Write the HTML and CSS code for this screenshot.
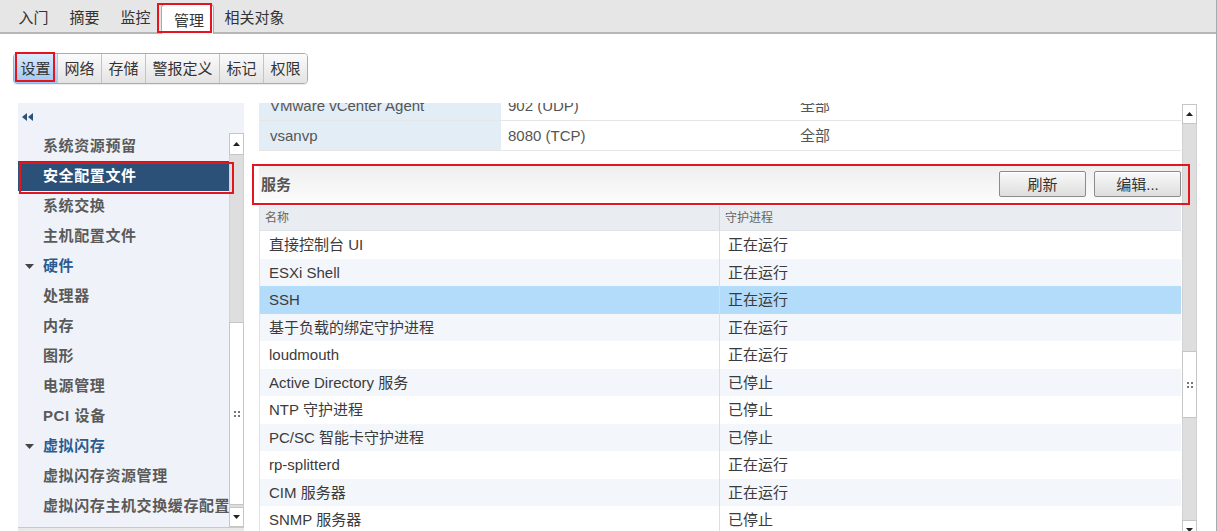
FILE: index.html
```html
<!DOCTYPE html>
<html lang="zh-CN">
<head>
<meta charset="utf-8">
<title>管理 - 设置 - 安全配置文件</title>
<link rel="stylesheet" href="styles.css">
</head>
<body>
<div class="page">
  <nav class="topbar">
    <div class="tab">入门</div>
    <div class="tab">摘要</div>
    <div class="tab">监控</div>
    <div class="tab active">管理</div>
    <div class="tab">相关对象</div>
  </nav>

  <div class="subbar">
    <div class="seg">
      <div class="seg-btn on">设置</div>
      <div class="seg-btn">网络</div>
      <div class="seg-btn">存储</div>
      <div class="seg-btn">警报定义</div>
      <div class="seg-btn">标记</div>
      <div class="seg-btn">权限</div>
    </div>
  </div>

  <div class="workspace">
    <aside class="side">
      <div class="side-top">
        <svg class="collapse-icon" width="11" height="8" viewBox="0 0 11 8"><polygon points="5,0 0,4 5,8" /><polygon points="11,0 6,4 11,8" /></svg>
      </div>
      <div class="side-body">
        <ul class="nav">
          <li>系统资源预留</li>
          <li class="sel">安全配置文件</li>
          <li>系统交换</li>
          <li>主机配置文件</li>
          <li class="cat"><svg class="caret" width="9" height="5" viewBox="0 0 9 5"><polygon points="0,0 9,0 4.5,5" /></svg>硬件</li>
          <li>处理器</li>
          <li>内存</li>
          <li>图形</li>
          <li>电源管理</li>
          <li>PCI 设备</li>
          <li class="cat"><svg class="caret" width="9" height="5" viewBox="0 0 9 5"><polygon points="0,0 9,0 4.5,5" /></svg>虚拟闪存</li>
          <li>虚拟闪存资源管理</li>
          <li>虚拟闪存主机交换缓存配置</li>
        </ul>
        <div class="vscroll side-scroll">
          <div class="sb-btn sb-up"><svg width="7" height="4" viewBox="0 0 7 4"><polygon points="0,4 7,4 3.5,0" /></svg></div>
          <div class="sb-track"><div class="sb-thumb side-thumb"><span class="grip"><i></i><i></i><i></i><i></i></span></div></div>
          <div class="sb-btn sb-down"><svg width="7" height="4" viewBox="0 0 7 4"><polygon points="0,0 7,0 3.5,4" /></svg></div>
        </div>
      </div>
      <div class="side-foot"></div>
    </aside>

    <main class="main">
      <div class="main-content">
        <div class="ports">
          <div class="prow"><div class="pc k">VMware vCenter Agent</div><div class="pc">902 (UDP)</div><div class="pc c3">全部</div></div>
          <div class="prow"><div class="pc k">vsanvp</div><div class="pc">8080 (TCP)</div><div class="pc c3">全部</div></div>
        </div>

        <section class="services">
          <header class="svc-head">
            <h2 class="svc-title">服务</h2>
            <div class="actions">
              <button class="btn">刷新</button>
              <button class="btn">编辑...</button>
            </div>
          </header>
          <div class="svc">
            <div class="shead"><div class="sh c1">名称</div><div class="sh">守护进程</div></div>
            <div class="sbody">
              <div class="srow"><div class="sc c1">直接控制台 UI</div><div class="sc">正在运行</div></div>
              <div class="srow"><div class="sc c1">ESXi Shell</div><div class="sc">正在运行</div></div>
              <div class="srow sel"><div class="sc c1">SSH</div><div class="sc">正在运行</div></div>
              <div class="srow"><div class="sc c1">基于负载的绑定守护进程</div><div class="sc">正在运行</div></div>
              <div class="srow"><div class="sc c1">loudmouth</div><div class="sc">正在运行</div></div>
              <div class="srow"><div class="sc c1">Active Directory 服务</div><div class="sc">已停止</div></div>
              <div class="srow"><div class="sc c1">NTP 守护进程</div><div class="sc">已停止</div></div>
              <div class="srow"><div class="sc c1">PC/SC 智能卡守护进程</div><div class="sc">已停止</div></div>
              <div class="srow"><div class="sc c1">rp-splitterd</div><div class="sc">正在运行</div></div>
              <div class="srow"><div class="sc c1">CIM 服务器</div><div class="sc">正在运行</div></div>
              <div class="srow"><div class="sc c1">SNMP 服务器</div><div class="sc">已停止</div></div>
            </div>
          </div>
        </section>
      </div>
      <div class="vscroll main-scroll">
        <div class="sb-btn sb-up"><svg width="7" height="4" viewBox="0 0 7 4"><polygon points="0,4 7,4 3.5,0" /></svg></div>
        <div class="sb-track"><div class="sb-thumb main-thumb"><span class="grip"><i></i><i></i><i></i><i></i></span></div></div>
        <div class="sb-btn sb-down"><svg width="7" height="4" viewBox="0 0 7 4"><polygon points="0,0 7,0 3.5,4" /></svg></div>
      </div>
    </main>
  </div>

  <div class="mark mark-tab"></div>
  <div class="mark mark-seg"></div>
  <div class="mark mark-nav"></div>
  <div class="mark mark-svc"></div>
</div>
</body>
</html>
```

FILE: styles.css
```css
* { box-sizing: border-box; }
html, body { margin: 0; padding: 0; }
body {
  font-family: "Liberation Sans", "Noto Sans CJK SC", sans-serif;
  font-size: 15px;
  color: #333;
  background: #fff;
}
.page {
  position: relative;
  width: 1217px;
  height: 531px;
  overflow: hidden;
  border-right: 1px solid #a3abb3;
  background: #fff;
}

/* top tabs */
.topbar {
  height: 34px;
  background: #e6e6e6;
  border-bottom: 2px solid #b7b7b7;
  display: flex;
  align-items: flex-end;
  padding-left: 8px;
}
.tab {
  height: 32px;
  line-height: 36px;
  padding: 0 10.5px;
  color: #333;
  white-space: nowrap;
}
.tab.active {
  height: 30px;
  margin-bottom: -2px;
  line-height: 32px;
  padding: 0 9px 0 12px;
  background: #fff;
  border: 1px solid #aaaaaa;
  border-bottom: 0;
  border-radius: 4px 4px 0 0;
}

/* segmented sub tabs */
.subbar {
  display: flex;
  padding: 19px 0 19px 13px;
}
.seg {
  display: flex;
  height: 31px;
  border: 1px solid #acacac;
  border-radius: 4px;
  overflow: hidden;
  box-shadow: 0 1px 1px rgba(0, 0, 0, 0.08);
}
.seg-btn {
  padding: 0 6.5px;
  line-height: 29px;
  background: linear-gradient(#fbfbfb, #e3e3e3);
  border-left: 1px solid #c4c4c4;
  color: #333;
  white-space: nowrap;
}
.seg-btn:first-child { border-left: 0; }
.seg-btn.on { background: linear-gradient(#dbebfd, #9dc6f3); }

/* workspace */
.workspace {
  display: flex;
  gap: 15px;
  padding-left: 18px;
  height: 428px;
}

/* sidebar */
.side {
  width: 226px;
  background: #eff3f9;
  display: flex;
  flex-direction: column;
}
.side-top {
  height: 28px;
  display: flex;
  align-items: center;
  padding-left: 4px;
}
.collapse-icon { fill: #2b5179; }
.side-body {
  height: 396px;
  display: flex;
}
.nav {
  flex: 1;
  min-width: 0;
  list-style: none;
  margin: 0;
  padding: 0;
  overflow: hidden;
}
.nav li {
  height: 30px;
  line-height: 30px;
  padding-left: 25px;
  white-space: nowrap;
  font-weight: bold;
  color: #5a5a5a;
  letter-spacing: 0.6px;
}
.nav li.sel { background: #2b5179; color: #fff; }
.nav li.cat {
  display: flex;
  align-items: center;
  padding-left: 7px;
  color: #2d5b8e;
}
.caret { fill: #444; margin-right: 9px; flex: none; }
.side-foot {
  height: 4px;
  border-top: 1px solid #c9c9c9;
  background: #e9e9e9;
}

/* scrollbars */
.vscroll {
  width: 15px;
  flex: none;
  display: flex;
  flex-direction: column;
  overflow: hidden;
}
.sb-btn {
  flex: none;
  background: #fff;
  border: 1px solid #c6c6c6;
  display: flex;
  align-items: center;
  justify-content: center;
}
.sb-btn svg { fill: #222; }
.sb-track {
  flex: none;
  background: #dedede;
  border-left: 1px solid #d2d2d2;
  border-right: 1px solid #d2d2d2;
}
.sb-thumb {
  background: #fff;
  border: 1px solid #c6c6c6;
  margin: 0 -1px;
  display: flex;
  align-items: center;
  justify-content: center;
}
.grip {
  display: grid;
  grid-template-columns: 2px 2px;
  gap: 2px;
}
.grip i { display: block; width: 2px; height: 2px; background: #777; }

.side-scroll { padding-top: 2px; }
.side-scroll .sb-up { height: 22px; }
.side-scroll .sb-track { height: 352px; }
.side-thumb { margin-top: 167px; height: 183px; }
.side-scroll .sb-down { height: 20px; }

.main-scroll { padding-top: 1px; height: 428px; }
.main-scroll .sb-up { height: 20px; }
.main-scroll .sb-track { height: 396px; }
.main-thumb { margin-top: 227px; height: 67px; }
.main-scroll .sb-down { height: 20px; }

/* main area */
.main {
  width: 938px;
  display: flex;
  height: 428px;
}
.main-content {
  width: 923px;
  padding-right: 1px;
  overflow: hidden;
}

.ports { margin-top: -12px; }
.prow {
  display: grid;
  grid-template-columns: 242px 289px 1fr;
  height: 30px;
  border-bottom: 1px solid #e6e6e6;
}
.pc {
  line-height: 29px;
  padding-left: 7px;
  color: #555;
  white-space: nowrap;
}
.pc.k { background: #e3edf6; padding-left: 11px; }
.pc.c3 { padding-left: 10px; }

.services { margin-top: 14px; }
.svc-head {
  height: 37px;
  display: flex;
  align-items: center;
  justify-content: space-between;
  padding-left: 2px;
  background: linear-gradient(#eeeeee, #fcfcfc);
}
.svc-title {
  margin: 0;
  font-size: 15px;
  font-weight: bold;
  color: #555;
}
.actions { display: flex; gap: 8px; }
.btn {
  width: 87px;
  height: 26px;
  padding: 0;
  font-family: inherit;
  font-size: 15px;
  color: #333;
  border: 1px solid #8c8c8c;
  border-radius: 2px;
  background: linear-gradient(#f9f9f9, #dedede);
  box-shadow: inset 0 1px 0 #fff;
}

.svc {
  margin-top: 4px;
  border-left: 1px solid #e2e2e2;
}
.shead {
  display: grid;
  grid-template-columns: 460px 1fr;
  height: 25px;
  background: #e9edf1;
  border-bottom: 1px solid #dfe3e8;
}
.sh {
  font-size: 12px;
  line-height: 24px;
  color: #666;
  padding-left: 5px;
}
.sh.c1 { border-right: 1px solid #d3d8de; }
.srow {
  display: grid;
  grid-template-columns: 460px 1fr;
  height: 27.5px;
  background: #fff;
}
.srow:nth-child(even) { background: #f3f6fa; }
.srow.sel { background: #b3dcfb; }
.sc {
  line-height: 27.5px;
  padding-left: 8px;
  color: #3b3b3b;
  white-space: nowrap;
}
.sc.c1 { padding-left: 9px; border-right: 1px solid #dedede; }

/* red annotation frames */
.mark {
  position: absolute;
  border: 2px solid #e3161f;
  pointer-events: none;
}
.mark-tab { left: 157px; top: 3px; width: 55px; height: 30px; }
.mark-seg { left: 15px; top: 52px; width: 40px; height: 30px; }
.mark-nav { left: 19px; top: 162px; width: 215px; height: 32px; }
.mark-svc { left: 252px; top: 164px; width: 938px; height: 41px; }
```
